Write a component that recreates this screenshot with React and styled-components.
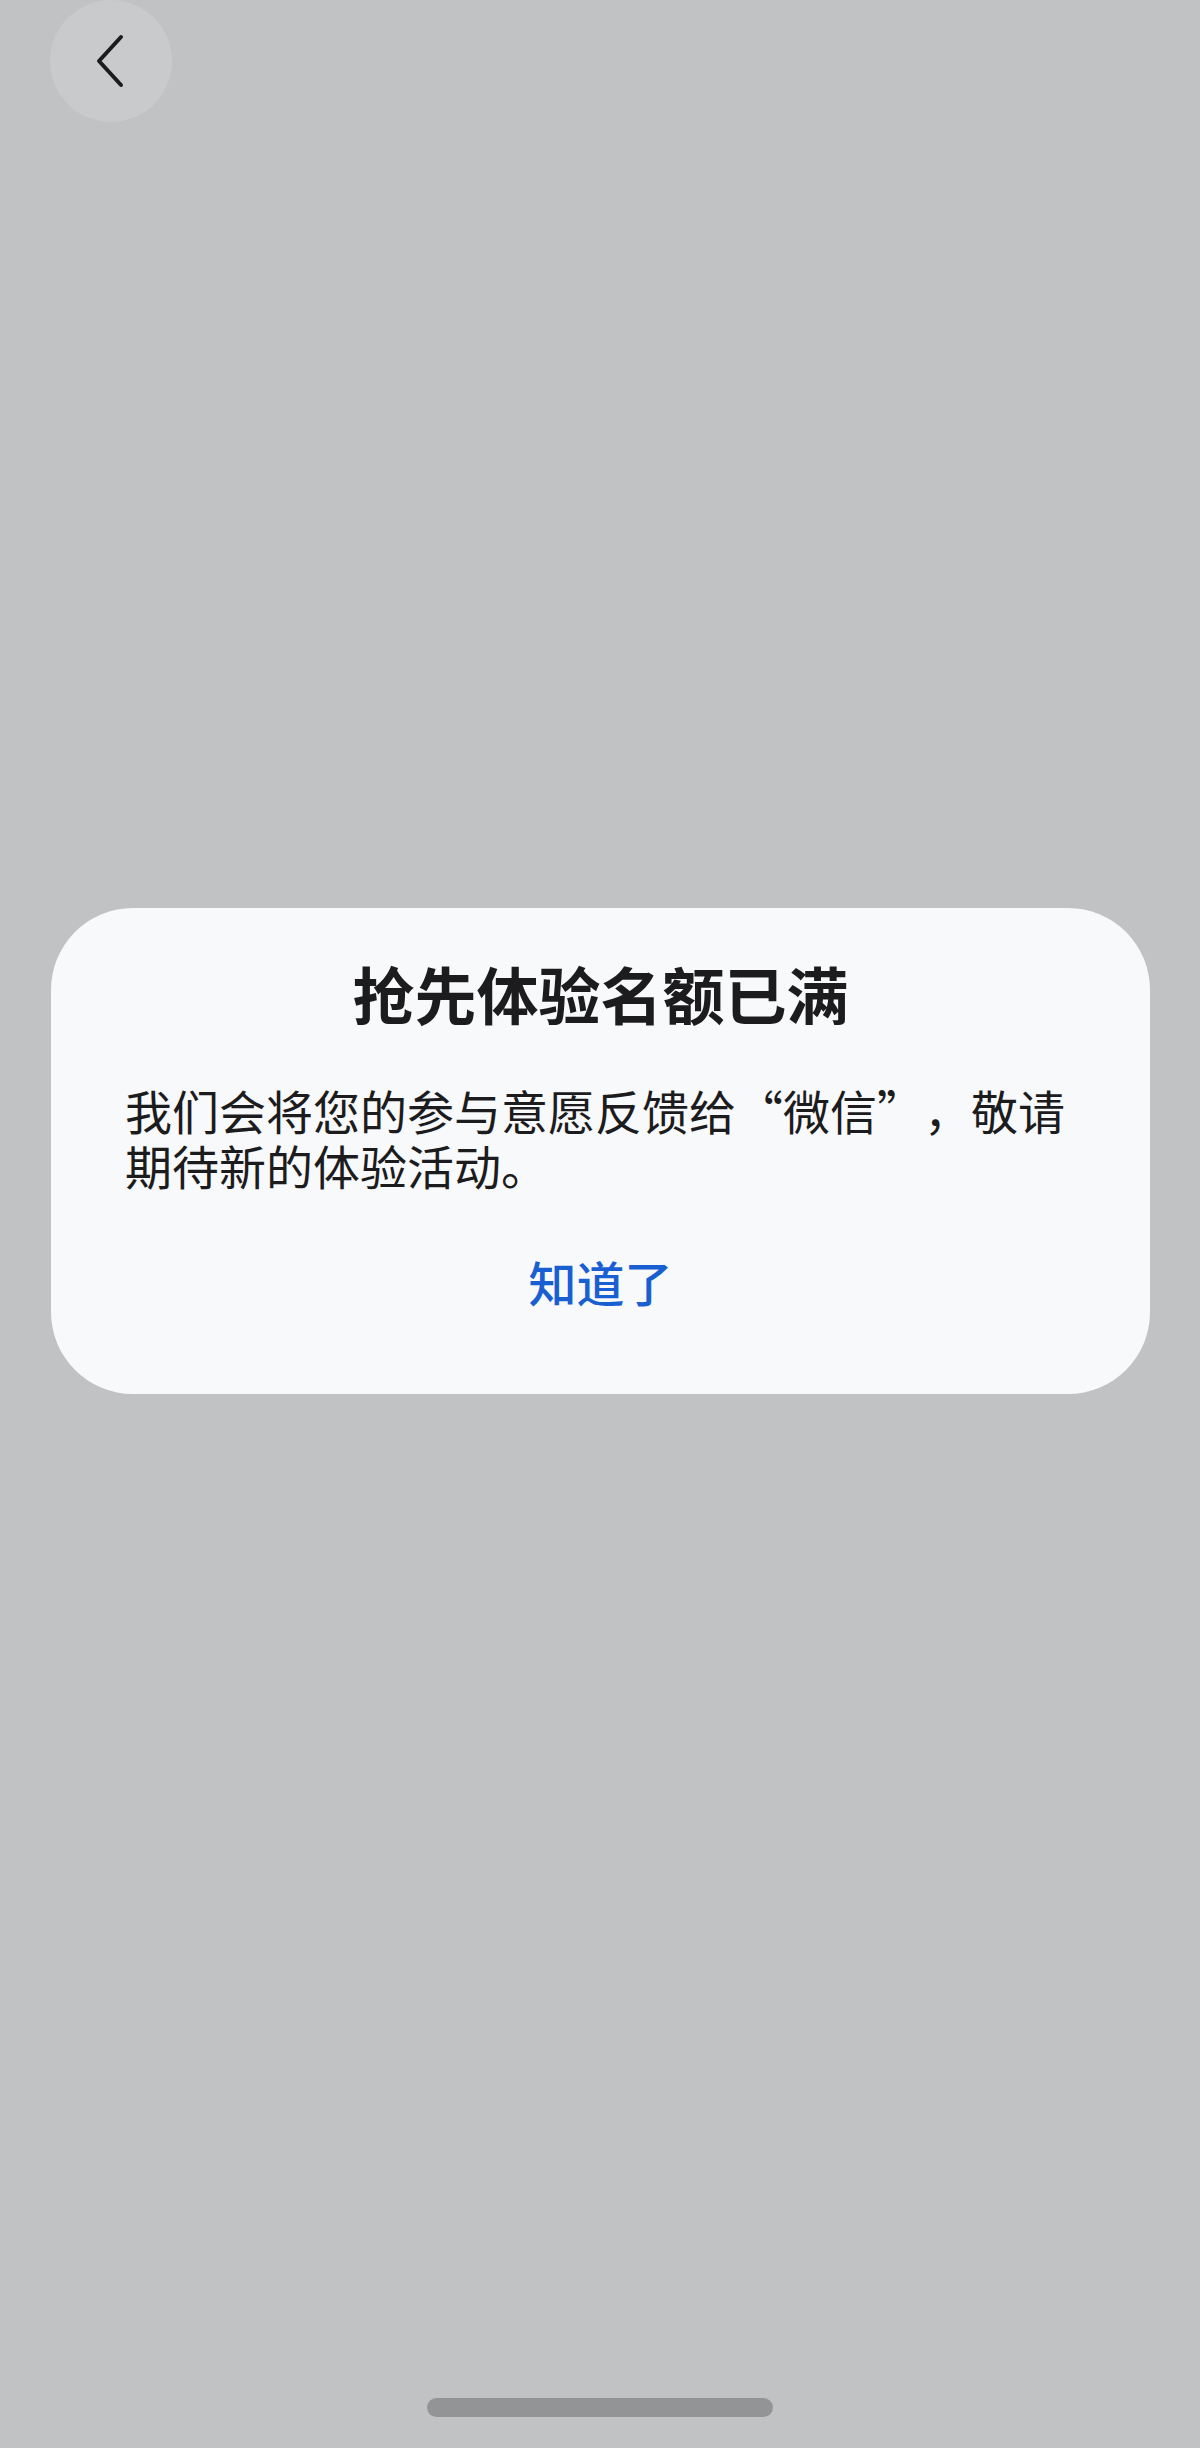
import styled, { createGlobalStyle } from "styled-components";

const GlobalStyle = createGlobalStyle`
  * {
    box-sizing: border-box;
  }
  body {
    margin: 0;
    background: #c1c2c4;
    font-family: "Noto Sans CJK SC", "Noto Sans", sans-serif;
  }
`;

const Page = styled.div`
  width: 1200px;
  height: 2448px;
  display: flex;
  flex-direction: column;
  background: #c1c2c4;
  overflow: hidden;
`;

const TopBar = styled.div`
  display: flex;
  align-items: center;
  height: 122px;
  padding-left: 50px;
`;

const BackButton = styled.button`
  width: 122px;
  height: 122px;
  border-radius: 50%;
  border: none;
  padding: 0;
  background: #c9cacb;
  display: flex;
  align-items: center;
  justify-content: center;
  cursor: pointer;
`;

const Dialog = styled.div`
  margin: 786px 50px 0 51px;
  background: #f8f9fa;
  border-radius: 82px;
  padding: 45px 74px 80px;
  display: flex;
  flex-direction: column;
`;

const Title = styled.h2`
  margin: 0;
  font-size: 62px;
  line-height: 80px;
  font-weight: 700;
  color: #1c1c1e;
  text-align: center;
`;

const Message = styled.p`
  margin: 49px 0 0;
  font-size: 47px;
  line-height: 55px;
  font-weight: 400;
  color: #1c1c1e;
`;

/* full-width CJK quote: the mark hugs the quoted word */
const Quote = styled.span`
  display: inline-block;
  width: 1em;
  text-align: ${(p) => (p.$open ? "right" : "left")};
`;

const ActionButton = styled.button`
  margin: 56px auto 0;
  border: none;
  background: none;
  padding: 0;
  font-family: inherit;
  font-size: 48px;
  line-height: 66px;
  font-weight: 500;
  color: #1a5fd2;
  cursor: pointer;
`;

const HomeIndicator = styled.div`
  margin: auto auto 31px;
  width: 346px;
  height: 19px;
  border-radius: 10px;
  background: #939496;
`;

const ChevronLeft = () => (
  <svg width="40" height="60" viewBox="0 0 40 60" fill="none">
    <path
      d="M30 6 L8 30 L30 54"
      stroke="#1c1c1e"
      strokeWidth="4"
      strokeLinecap="round"
      strokeLinejoin="round"
    />
  </svg>
);

export default function App() {
  return (
    <>
      <GlobalStyle />
      <Page lang="zh-CN">
        <TopBar>
          <BackButton aria-label="返回">
            <ChevronLeft />
          </BackButton>
        </TopBar>
        <Dialog>
          <Title>抢先体验名额已满</Title>
          <Message>
            我们会将您的参与意愿反馈给<Quote $open>“</Quote>微信<Quote>”</Quote>，敬请期待新的体验活动。
          </Message>
          <ActionButton>知道了</ActionButton>
        </Dialog>
        <HomeIndicator />
      </Page>
    </>
  );
}
